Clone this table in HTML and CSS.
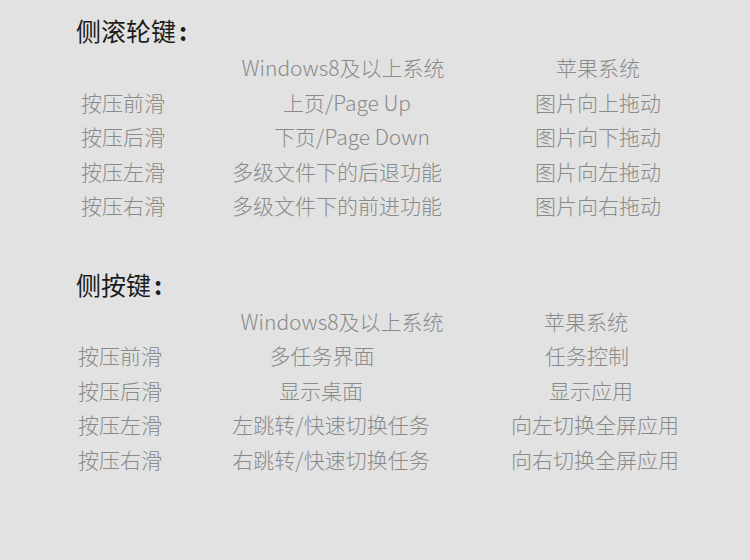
FILE: index.html
```html
<!DOCTYPE html>
<html lang="zh-CN">
<head>
<meta charset="utf-8">
<title>侧滚轮键 / 侧按键</title>
<link rel="stylesheet" href="styles.css">
</head>
<body>
<main class="page">
  <section class="block block-wheel">
    <h2 class="title">侧滚轮键<span class="colon">:</span></h2>
    <div class="table">
      <span class="c1"></span><span class="c2">Windows8及以上系统</span><span class="c3">苹果系统</span>
      <span class="c1">按压前滑</span><span class="c2 r8">上页/Page Up</span><span class="c3">图片向上拖动</span>
      <span class="c1">按压后滑</span><span class="c2 r18">下页/Page Down</span><span class="c3">图片向下拖动</span>
      <span class="c1">按压左滑</span><span class="c2 l12">多级文件下的后退功能</span><span class="c3">图片向左拖动</span>
      <span class="c1">按压右滑</span><span class="c2 l12">多级文件下的前进功能</span><span class="c3">图片向右拖动</span>
    </div>
  </section>
  <section class="block block-side">
    <h2 class="title">侧按键<span class="colon">:</span></h2>
    <div class="table">
      <span class="c1"></span><span class="c2 r22">Windows8及以上系统</span><span class="c3 l10">苹果系统</span>
      <span class="c1">按压前滑</span><span class="c2 l18">多任务界面</span><span class="c3 l8">任务控制</span>
      <span class="c1">按压后滑</span><span class="c2 l20">显示桌面</span><span class="c3">显示应用</span>
      <span class="c1">按压左滑</span><span class="c2">左跳转/快速切换任务</span><span class="c3 r8">向左切换全屏应用</span>
      <span class="c1">按压右滑</span><span class="c2">右跳转/快速切换任务</span><span class="c3 r8">向右切换全屏应用</span>
    </div>
  </section>
</main>
</body>
</html>
```

FILE: styles.css
```css
html, body {
  margin: 0;
  padding: 0;
}
body {
  background: #e2e2e2;
  width: 750px;
  height: 560px;
  overflow: hidden;
  font-family: "Noto Sans CJK SC", "Noto Sans", sans-serif;
}
.page {
  padding-top: 10px;
}
.block {
  display: flex;
  flex-direction: column;
}
.block-side {
  margin-top: 41px;
}
.title {
  margin: 0;
  padding-left: 76px;
  font-size: 25px;
  font-weight: 400;
  line-height: 40px;
  color: #1c1c1c;
}
.colon {
  margin-left: 3px;
  font-weight: 700;
}
.table {
  display: grid;
  font-size: 21px;
  font-weight: 300;
  line-height: 34.5px;
  color: #8a8a8a;
  white-space: nowrap;
}
.block-wheel .table {
  padding-left: 81px;
  grid-template-columns: 142px 240px 270px;
}
.block-side .table {
  padding-left: 78px;
  grid-template-columns: 133px 240px 280px;
}
.c1 {
  text-align: left;
}
.c2, .c3 {
  text-align: center;
}
.r8 { padding-left: 8px; }
.r18 { padding-left: 18px; }
.r22 { padding-left: 22px; }
.l12 { padding-right: 12px; }
.l18 { padding-right: 18px; }
.l20 { padding-right: 20px; }
.l10 { padding-right: 10px; }
.l8 { padding-right: 8px; }
```
